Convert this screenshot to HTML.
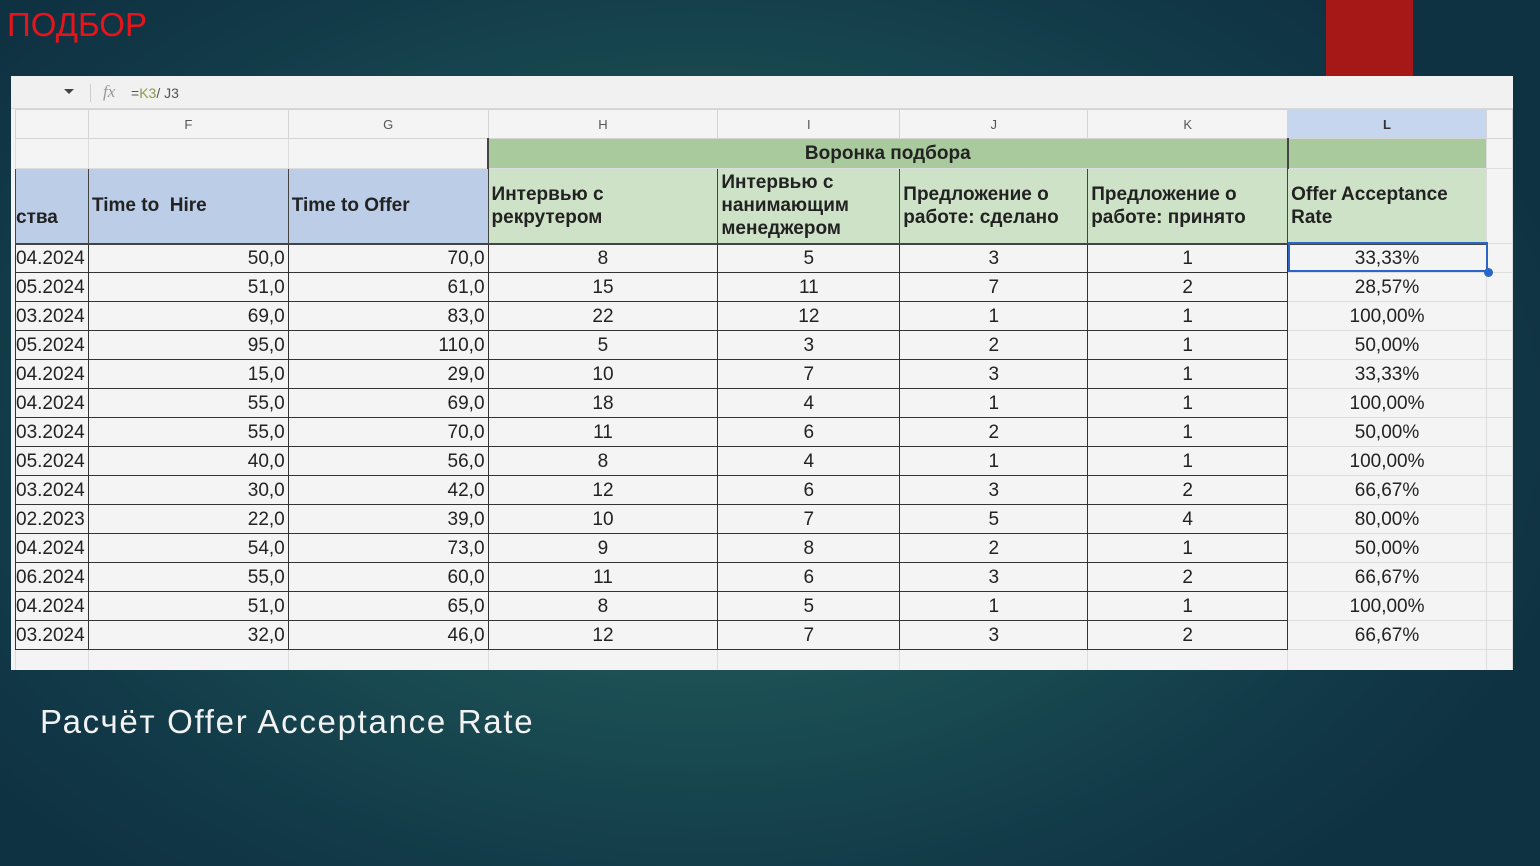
<!DOCTYPE html>
<html><head><meta charset="utf-8"><style>
*{margin:0;padding:0;box-sizing:border-box}
body{width:1540px;height:866px;overflow:hidden;position:relative;font-family:"Liberation Sans",sans-serif;
background:radial-gradient(ellipse 900px 600px at 700px 420px,#245f5e 0%,#1b4f54 45%,#123a48 80%,#0f3242 100%);}
.title{position:absolute;left:7px;top:6px;color:#e8141a;font-size:33px;letter-spacing:0px;}
.red{position:absolute;left:1326px;top:0;width:87px;height:76px;background:#a61818}
.sheet{position:absolute;left:11px;top:76px;width:1502px;height:594px;background:#f4f4f4;overflow:hidden}
.fbar{position:absolute;left:0;top:0;width:1502px;height:33px;background:#f1f1f1;border-bottom:1px solid #d8d8d8}
.fbar .tri{position:absolute;left:53px;top:13px;width:0;height:0;border-left:5px solid transparent;border-right:5px solid transparent;border-top:5px solid #444}
.fbar .sep{position:absolute;left:79px;top:8px;width:1px;height:18px;background:#ccc}
.fbar .fx{position:absolute;left:92px;top:6px;font-style:italic;color:#999;font-family:"Liberation Serif",serif;font-size:17px}
.fbar .f{position:absolute;left:120px;top:9px;font-size:14px;color:#555}
table{position:absolute;left:4px;top:33px;border-collapse:collapse;table-layout:fixed}
td{overflow:hidden;white-space:nowrap;font-size:19px;color:#222;border:1px solid #ddd;height:29px;padding:0 3px}
tr.ch td{height:29px;font-size:13px;color:#555;text-align:center;background:#f4f4f4;border-color:#d4d4d4}
tr.ch td.sel{background:#c6d6ee;color:#333;font-weight:bold}
tr.top td{height:30px;background:#f4f4f4}
tr.top td.g{background:#a9ca9c;text-align:center;font-weight:bold;font-size:19px;border-left:2px solid #444;border-right:2px solid #444}
tr.hd td{height:75px;font-weight:bold;font-size:19px;white-space:normal;line-height:23px;vertical-align:middle;border:1px solid #444;border-bottom:2px solid #444}
.b{background:#bccde8}.lg{background:#cde2c6}
tr.d td{background:#f4f4f4;border-left:1px solid #333;border-right:1px solid #333;border-bottom:1px solid #333;border-top:none;padding-top:2px}
tr.d td.r{text-align:right}tr.d td.c{text-align:center}
tr.d td.l{border-left:1px solid #ddd;border-right:1px solid #ddd;border-bottom:1px solid #ddd;text-align:center}
.cap{position:absolute;left:40px;top:703px;color:#f2f2f2;font-size:33px;letter-spacing:1.7px}
.selb{position:absolute;left:1288px;top:242px;width:200px;height:30px;border:2px solid #2a66c8}
.dot{position:absolute;left:1484px;top:268px;width:9px;height:9px;border-radius:50%;background:#2a66c8}
</style></head><body>
<div class="title">ПОДБОР</div>
<div class="red"></div>
<div class="sheet">
<div class="fbar"><div class="tri"></div><div class="sep"></div><div class="fx">fx</div><div class="f">=<span style="color:#8a9c4a">K3</span>/ J3</div></div>
<table>
<colgroup><col style="width:73px"><col style="width:200px"><col style="width:200px"><col style="width:230px"><col style="width:182px"><col style="width:188px"><col style="width:200px"><col style="width:199px"><col style="width:26px"></colgroup>
<tr class="ch"><td></td><td>F</td><td>G</td><td>H</td><td>I</td><td>J</td><td>K</td><td class="sel">L</td><td></td></tr>
<tr class="top"><td></td><td></td><td></td><td class="g" colspan="4">Воронка подбора</td><td class="g" style="border-left:1px solid #444;border-right:1px solid #ddd"></td><td></td></tr>
<tr class="hd"><td class="b" style="vertical-align:bottom;padding-bottom:14px;padding-left:0">ства</td><td class="b">Time to&nbsp; Hire</td><td class="b">Time to Offer</td><td class="lg">Интервью с рекрутером</td><td class="lg">Интервью с нанимающим менеджером</td><td class="lg">Предложение о работе: сделано</td><td class="lg">Предложение о работе: принято</td><td class="lg" style="border-right:1px solid #ddd">Offer Acceptance Rate</td><td style="background:#f4f4f4;border:1px solid #ddd"></td></tr>
<tr class="d"><td style="padding-left:0">04.2024</td><td class="r">50,0</td><td class="r">70,0</td><td class="c">8</td><td class="c">5</td><td class="c">3</td><td class="c">1</td><td class="l">33,33%</td><td class="l"></td></tr>
<tr class="d"><td style="padding-left:0">05.2024</td><td class="r">51,0</td><td class="r">61,0</td><td class="c">15</td><td class="c">11</td><td class="c">7</td><td class="c">2</td><td class="l">28,57%</td><td class="l"></td></tr>
<tr class="d"><td style="padding-left:0">03.2024</td><td class="r">69,0</td><td class="r">83,0</td><td class="c">22</td><td class="c">12</td><td class="c">1</td><td class="c">1</td><td class="l">100,00%</td><td class="l"></td></tr>
<tr class="d"><td style="padding-left:0">05.2024</td><td class="r">95,0</td><td class="r">110,0</td><td class="c">5</td><td class="c">3</td><td class="c">2</td><td class="c">1</td><td class="l">50,00%</td><td class="l"></td></tr>
<tr class="d"><td style="padding-left:0">04.2024</td><td class="r">15,0</td><td class="r">29,0</td><td class="c">10</td><td class="c">7</td><td class="c">3</td><td class="c">1</td><td class="l">33,33%</td><td class="l"></td></tr>
<tr class="d"><td style="padding-left:0">04.2024</td><td class="r">55,0</td><td class="r">69,0</td><td class="c">18</td><td class="c">4</td><td class="c">1</td><td class="c">1</td><td class="l">100,00%</td><td class="l"></td></tr>
<tr class="d"><td style="padding-left:0">03.2024</td><td class="r">55,0</td><td class="r">70,0</td><td class="c">11</td><td class="c">6</td><td class="c">2</td><td class="c">1</td><td class="l">50,00%</td><td class="l"></td></tr>
<tr class="d"><td style="padding-left:0">05.2024</td><td class="r">40,0</td><td class="r">56,0</td><td class="c">8</td><td class="c">4</td><td class="c">1</td><td class="c">1</td><td class="l">100,00%</td><td class="l"></td></tr>
<tr class="d"><td style="padding-left:0">03.2024</td><td class="r">30,0</td><td class="r">42,0</td><td class="c">12</td><td class="c">6</td><td class="c">3</td><td class="c">2</td><td class="l">66,67%</td><td class="l"></td></tr>
<tr class="d"><td style="padding-left:0">02.2023</td><td class="r">22,0</td><td class="r">39,0</td><td class="c">10</td><td class="c">7</td><td class="c">5</td><td class="c">4</td><td class="l">80,00%</td><td class="l"></td></tr>
<tr class="d"><td style="padding-left:0">04.2024</td><td class="r">54,0</td><td class="r">73,0</td><td class="c">9</td><td class="c">8</td><td class="c">2</td><td class="c">1</td><td class="l">50,00%</td><td class="l"></td></tr>
<tr class="d"><td style="padding-left:0">06.2024</td><td class="r">55,0</td><td class="r">60,0</td><td class="c">11</td><td class="c">6</td><td class="c">3</td><td class="c">2</td><td class="l">66,67%</td><td class="l"></td></tr>
<tr class="d"><td style="padding-left:0">04.2024</td><td class="r">51,0</td><td class="r">65,0</td><td class="c">8</td><td class="c">5</td><td class="c">1</td><td class="c">1</td><td class="l">100,00%</td><td class="l"></td></tr>
<tr class="d"><td style="padding-left:0">03.2024</td><td class="r">32,0</td><td class="r">46,0</td><td class="c">12</td><td class="c">7</td><td class="c">3</td><td class="c">2</td><td class="l">66,67%</td><td class="l"></td></tr>
<tr class="d"><td class="l"></td><td class="l"></td><td class="l"></td><td class="l"></td><td class="l"></td><td class="l"></td><td class="l"></td><td class="l"></td><td class="l"></td></tr>
</table>
</div>
<div class="selb"></div><div class="dot"></div>
<div class="cap">Расчёт Offer Acceptance Rate</div>
</body></html>
